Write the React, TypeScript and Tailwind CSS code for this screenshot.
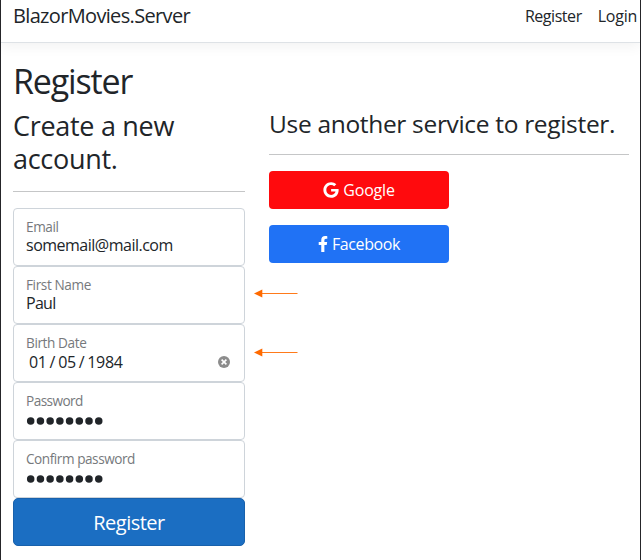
import { FaFacebookF, FaGoogle } from "react-icons/fa";

type FieldProps = {
  label: string;
  labelClass: string;
  children: React.ReactNode;
};

function Field({ label, labelClass, children }: FieldProps) {
  return (
    <div className="h-[58px] rounded-[4px] border border-[#ced4da] bg-white pl-3 pr-[14px] pt-[8px]">
      <div className={`h-[19px] whitespace-nowrap text-[13.6px] leading-[19px] text-[#76797c] ${labelClass}`}>{label}</div>
      <div className="flex h-[18px] items-center justify-between whitespace-nowrap text-[16px] leading-[18px]">{children}</div>
    </div>
  );
}

function Dots() {
  return (
    <svg width="78" height="8" viewBox="0 0 78 8" className="mt-[3px]" fill="#212529">
      {Array.from({ length: 8 }, (_, i) => (
        <circle key={i} cx={4.7 + i * 9.72} cy="4" r="3.75" />
      ))}
    </svg>
  );
}

function Arrow() {
  return (
    <svg width="44" height="9" viewBox="0 0 44 9" className="block">
      <path d="M8 4.5H43.5" stroke="#ff7a1a" strokeWidth="1" />
      <path d="M0 4.5L8.3 .5V8.5Z" fill="#ff6a00" />
    </svg>
  );
}

export default function App() {
  return (
    <div className="relative h-[560px] w-[641px] overflow-hidden border-x border-[#252529] bg-white font-['Open_Sans','Noto_Sans',sans-serif] text-[#212529]">
      <header className="flex h-[43px] items-start justify-between border-b border-[#dee2e6] pl-3 pr-[3px] pt-[2px] shadow-[0_4px_12px_rgba(0,0,0,0.05)]">
        <span className="text-[20px] leading-[28px] tracking-[-0.66px]">BlazorMovies.Server</span>
        <nav className="flex gap-4 text-[16px] leading-[28px]">
          <span className="tracking-[-0.45px]">Register</span>
          <span className="tracking-[-0.25px]">Login</span>
        </nav>
      </header>

      <main className="px-3 pt-4">
        <h1 className="mb-2 h-[42px] pt-px text-[34px] leading-[43px] tracking-[-1.15px]">Register</h1>
        <div className="flex gap-6">
          <section className="w-[232px] shrink-0">
            <h2 className="text-[27px] tracking-[-0.3px]">
              <span className="block pt-px leading-[32px]">Create a new</span>
              <span className="block pt-px leading-[32px]">account.</span>
            </h2>
            <hr className="mb-4 mt-4 border-[#c5c6c7]" />
            <form>
              <Field label="Email" labelClass="tracking-[-0.4px]">
                <span className="tracking-[-0.5px]">somemail@mail.com</span>
              </Field>
              <Field label="First Name" labelClass="tracking-[-0.4px]">
                <span className="tracking-[-0.7px]">Paul</span>
              </Field>
              <Field label="Birth Date" labelClass="tracking-[-0.4px]">
                <span className="flex gap-[3px] pl-[3px] pt-[2px] tracking-[-0.35px]">
                  <span>01</span><span>/</span><span>05</span><span>/</span><span>1984</span>
                </span>
                <svg width="12" height="12" viewBox="0 0 12 12" className="mt-[2px]">
                  <circle cx="6" cy="6" r="6" fill="#8c8c8c" />
                  <path d="M3.6 3.6L8.4 8.4M8.4 3.6L3.6 8.4" stroke="white" strokeWidth="1.6" />
                </svg>
              </Field>
              <Field label="Password" labelClass="tracking-[-0.55px]"><Dots /></Field>
              <Field label="Confirm password" labelClass="tracking-[-0.45px]"><Dots /></Field>
              <button type="button" className="block h-12 w-full rounded-[5px] border border-[#1861ac] bg-[#1b6ec2] pt-px text-[20px] leading-[46px] tracking-[-0.5px] text-white">Register</button>
            </form>
          </section>

          <section className="w-[360px] shrink-0">
            <h3 className="whitespace-nowrap text-[24.5px] leading-[29px] tracking-[-0.32px]">Use another service to register.</h3>
            <hr className="mb-4 mt-4 border-[#c5c6c7]" />
            <button type="button" className="mb-4 flex h-[38px] w-[180px] items-center justify-center gap-1 rounded-[4px] bg-[#ff0a0d] text-[16px] text-white">
              <FaGoogle size={16} />
              <span className="tracking-[-0.2px]">Google</span>
            </button>
            <button type="button" className="flex h-[38px] w-[180px] items-center justify-center gap-1 rounded-[4px] bg-[#2072f5] text-[16px] text-white">
              <FaFacebookF size={16} className="w-[10px]" />
              <span className="tracking-[-0.4px]">Facebook</span>
            </button>
          </section>
        </div>
      </main>

      <div className="absolute left-[253px] top-[289px]"><Arrow /></div>
      <div className="absolute left-[253px] top-[348px]"><Arrow /></div>
    </div>
  );
}
